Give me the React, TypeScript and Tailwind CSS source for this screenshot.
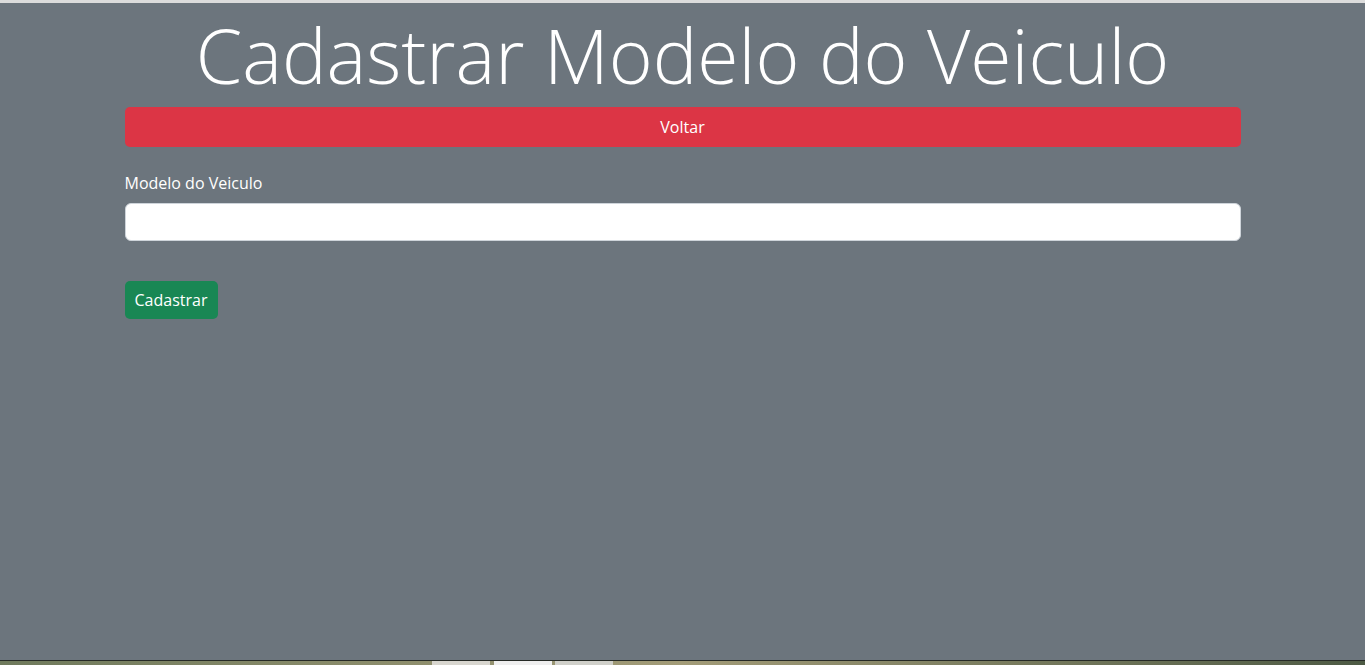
export default function App() {
  return (
    <div className="flex h-screen flex-col overflow-hidden bg-[#6c757d] font-['Open_Sans',sans-serif] text-white">
      <div className="h-[3px] bg-[#dcdcdc]" />
      <main className="flex-1">
        <div className="mx-auto w-[1116px]">
          <h1 className="mb-1 pt-1 text-center text-[75px] font-light leading-[96px]">
            Cadastrar Modelo do Veiculo
          </h1>
          <button className="h-10 w-full rounded-[5px] bg-[#dc3545] text-base text-white">
            Voltar
          </button>
          <form className="mt-6">
            <label className="mb-2 block text-base leading-6">Modelo do Veiculo</label>
            <input
              type="text"
              className="block h-[38px] w-full rounded-[6px] border border-[#ced4da] bg-white px-3 text-base text-[#212529]"
            />
            <button
              type="button"
              className="mt-10 h-[38px] w-[93px] rounded-[5px] bg-[#198754] text-base text-white"
            >
              Cadastrar
            </button>
          </form>
        </div>
      </main>
      <div className="h-px bg-[#262a26]" />
      <div className="flex h-1 bg-gradient-to-r from-[#6f7a5c] via-[#a39c78] to-[#4d5a44]">
        <div className="w-[432px]" />
        <div className="w-[58px] bg-[#d8d6cf]" />
        <div className="ml-1 w-[58px] bg-[#efefef]" />
        <div className="ml-[3px] w-[58px] bg-[#d0d0ca]" />
      </div>
    </div>
  );
}
